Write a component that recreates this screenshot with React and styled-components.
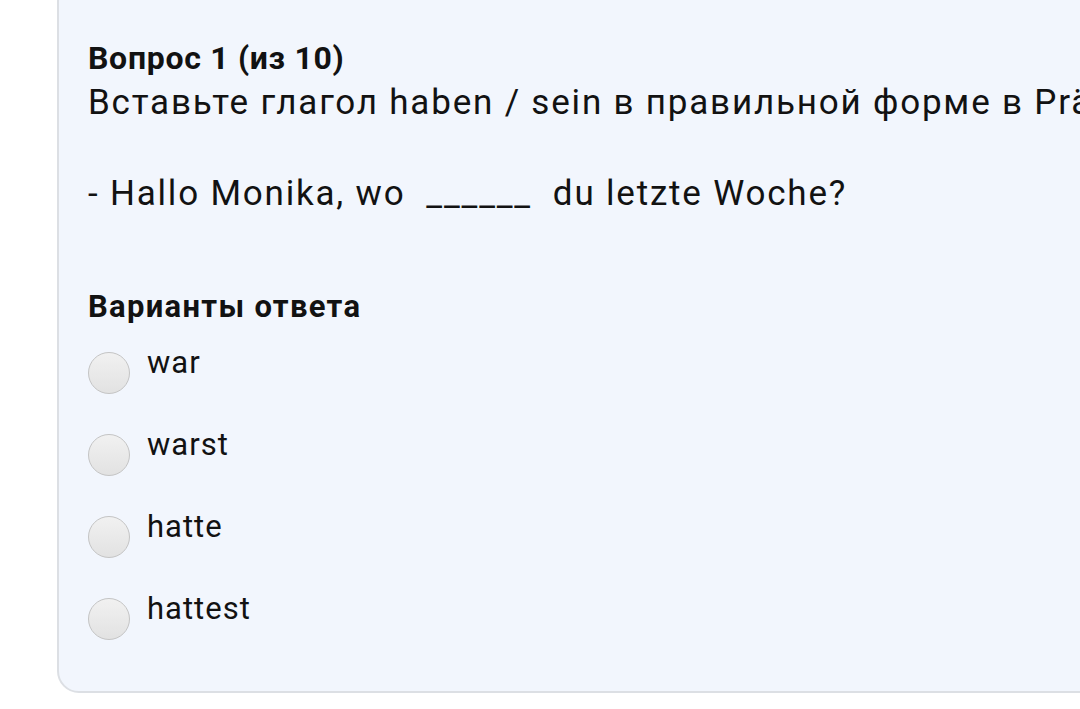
import styled, { createGlobalStyle } from "styled-components";

const GlobalStyle = createGlobalStyle`
  html, body {
    margin: 0;
    padding: 0;
    background: #ffffff;
    overflow: hidden;
  }
  body {
    font-family: Roboto, "Noto Sans", Arial, sans-serif;
    color: #121212;
  }
`;

const Page = styled.div`
  width: 1080px;
  height: 709px;
  overflow: hidden;
  padding-left: 57px;
  box-sizing: border-box;
`;

const Card = styled.div`
  width: 1120px;
  margin-top: -20px;
  box-sizing: border-box;
  background: #f2f6fd;
  border: 2px solid #dcdfe4;
  border-radius: 22px;
  padding: 56px 0 51px 29px;
`;

const Title = styled.div`
  font-size: 32px;
  font-weight: 700;
  line-height: 40px;
  letter-spacing: 0.7px;
`;

const Question = styled.div`
  margin-top: 2px;
  font-size: 35px;
  line-height: 45.5px;
  letter-spacing: 1.8px;
  white-space: pre;
`;

const Heading = styled.div`
  margin-top: 70px;
  font-size: 31px;
  font-weight: 700;
  line-height: 40px;
  letter-spacing: 1.3px;
`;

const Options = styled.div`
  margin-top: 25px;
  display: flex;
  flex-direction: column;
  gap: 40px;
`;

const Option = styled.label`
  display: flex;
  align-items: flex-start;
  gap: 17px;
  height: 42px;
`;

const Radio = styled.span`
  flex: none;
  width: 42px;
  height: 42px;
  box-sizing: border-box;
  border-radius: 50%;
  border: 1.5px solid #c4c4c4;
  background: linear-gradient(180deg, #f1f1f1 0%, #e2e2e2 100%);
`;

const OptionText = styled.span`
  font-size: 31px;
  line-height: 22px;
  letter-spacing: 1px;
`;

const answers = ["war", "warst", "hatte", "hattest"];

export default function App() {
  return (
    <>
      <GlobalStyle />
      <Page>
        <Card>
          <Title>Вопрос 1 (из 10)</Title>
          <Question>
            {"Вставьте глагол haben / sein в правильной форме в Präteritum.\n\n- Hallo Monika, wo  ______  du letzte Woche?"}
          </Question>
          <Heading>Варианты ответа</Heading>
          <Options>
            {answers.map((a) => (
              <Option key={a}>
                <Radio />
                <OptionText>{a}</OptionText>
              </Option>
            ))}
          </Options>
        </Card>
      </Page>
    </>
  );
}
